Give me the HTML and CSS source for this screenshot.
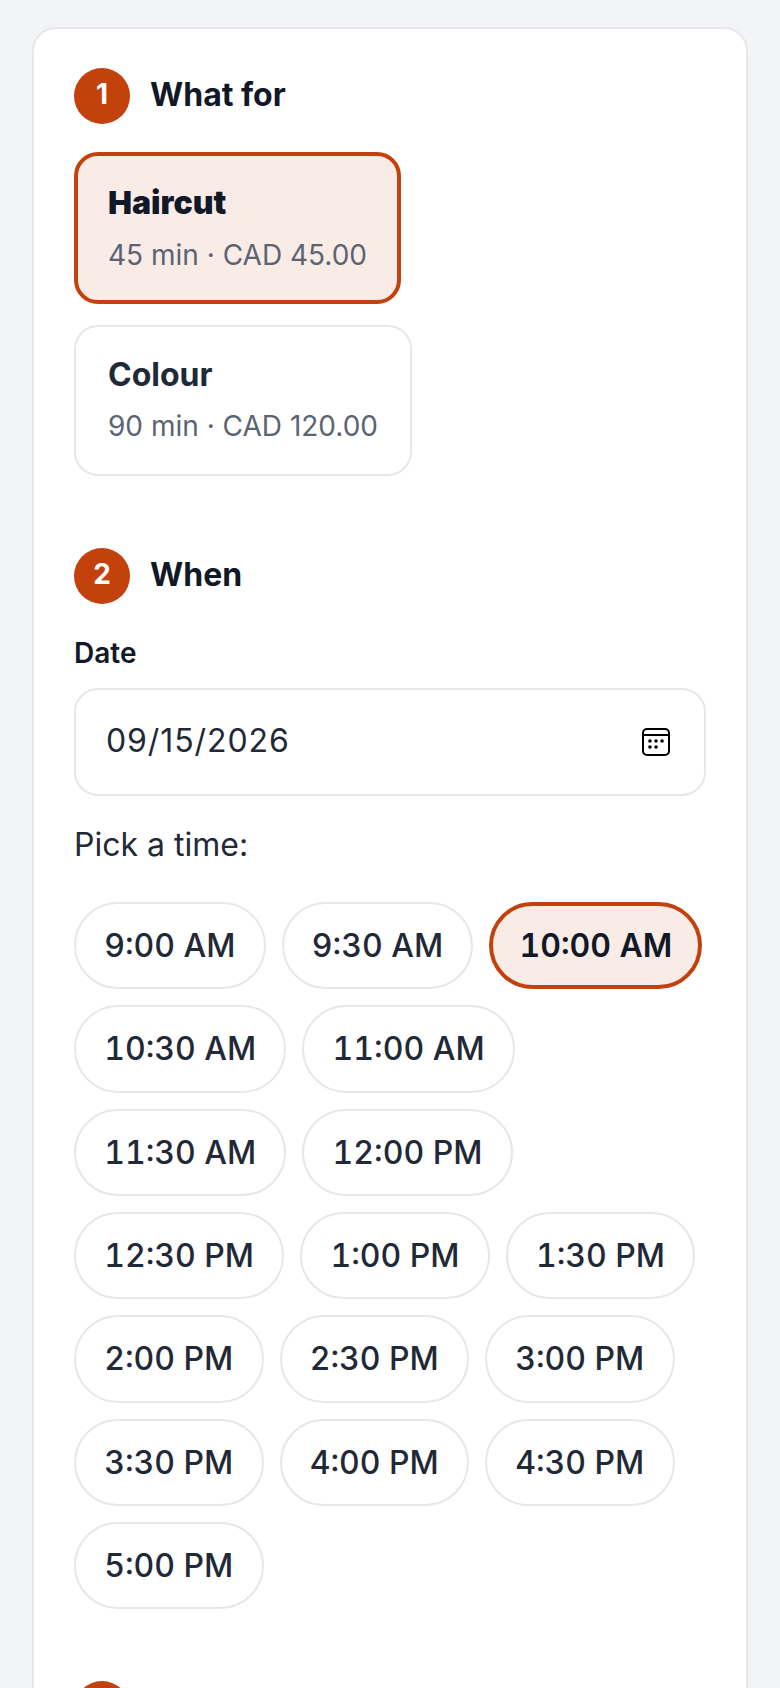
FILE: index.html
```html
<!DOCTYPE html>
<html lang="en">
<head>
  <meta charset="UTF-8">
  <title>Book an appointment</title>
  <link rel="stylesheet" href="styles.css">
</head>
<body>
  <main class="card">
    <section class="step">
      <h2 class="step-title"><span class="badge"><span class="badge-num">1</span></span><span class="title-text">What for</span></h2>
      <div class="services">
        <button class="service selected">
          <span class="service-name">Haircut</span>
          <span class="service-meta">45 min · CAD 45.00</span>
        </button>
        <button class="service">
          <span class="service-name">Colour</span>
          <span class="service-meta">90 min · CAD 120.00</span>
        </button>
      </div>
    </section>

    <section class="step">
      <h2 class="step-title when-title"><span class="badge"><span class="badge-num">2</span></span><span class="title-text">When</span></h2>
      <label class="field-label">Date</label>
      <div class="date-input">
        <span class="date-value">09/15/2026</span>
        <svg class="date-icon" viewBox="0 0 28 28" fill="none" stroke="#000" stroke-width="2">
          <rect x="1" y="1" width="26" height="26" rx="4"/>
          <path d="M1 7h26"/>
          <g fill="#000" stroke="none">
            <circle cx="8" cy="13" r="1.8"/>
            <circle cx="14" cy="13" r="1.8"/>
            <circle cx="20" cy="13" r="1.8"/>
            <circle cx="8" cy="19" r="1.8"/>
            <circle cx="14" cy="19" r="1.8"/>
          </g>
        </svg>
      </div>
      <p class="time-label">Pick a time:</p>
      <div class="times">
        <button class="time">9:00 AM</button>
        <button class="time">9:30 AM</button>
        <button class="time selected">10:00 AM</button>
        <button class="time">10:30 AM</button>
        <button class="time">11:00 AM</button>
        <button class="time">11:30 AM</button>
        <button class="time">12:00 PM</button>
        <button class="time">12:30 PM</button>
        <button class="time">1:00 PM</button>
        <button class="time">1:30 PM</button>
        <button class="time">2:00 PM</button>
        <button class="time">2:30 PM</button>
        <button class="time">3:00 PM</button>
        <button class="time">3:30 PM</button>
        <button class="time">4:00 PM</button>
        <button class="time">4:30 PM</button>
        <button class="time">5:00 PM</button>
      </div>
    </section>

    <section class="step">
      <div class="step-title"><span class="badge"></span></div>
    </section>
  </main>
</body>
</html>
```

FILE: styles.css
```css
html, body {
  height: 100%;
  overflow: hidden;
}
body {
  margin: 0;
  padding: 27px 32px 0;
  background-color: #f3f4f6;
  color: #111827;
  font-family: Inter, "Liberation Sans", sans-serif;
}
button {
  font-family: inherit;
  cursor: pointer;
}
.card {
  background-color: #fff;
  border: 2px solid #e5e7eb;
  border-radius: 24px;
  padding: 39px 40px;
}
.step {
  margin-bottom: 72px;
}
.step-title {
  display: flex;
  align-items: center;
  gap: 20px;
  margin: 0 0 28px;
  font-size: 32px;
  font-weight: 700;
  color: #111827;
}
.when-title {
  margin-bottom: 32px;
}
.title-text,
.badge-num {
  padding-bottom: 4px;
}
.badge {
  display: flex;
  align-items: center;
  justify-content: center;
  width: 56px;
  height: 56px;
  border-radius: 50%;
  background-color: #c2410c;
  color: #fff;
  font-size: 28px;
  font-weight: 700;
}
.services {
  display: flex;
  flex-direction: column;
  align-items: flex-start;
  gap: 21px;
}
.service {
  display: flex;
  flex-direction: column;
  gap: 15px;
  padding: 28px 32px 31px;
  background-color: #fff;
  border: 2px solid #e5e7eb;
  border-radius: 24px;
  text-align: left;
}
.service.selected {
  background-color: #f9ece7;
  border: 4px solid #c2410c;
  gap: 16px;
  padding: 27px 30px 28px;
}
.service-name {
  font-size: 32px;
  font-weight: 700;
  color: #1f2937;
}
.selected .service-name {
  font-weight: 900;
  color: #111827;
}
.service-meta {
  font-size: 28px;
  color: #5b6472;
}
.field-label {
  display: block;
  margin-bottom: 18px;
  font-size: 28px;
  font-weight: 600;
}
.date-input {
  display: flex;
  align-items: center;
  justify-content: space-between;
  height: 108px;
  box-sizing: border-box;
  padding: 0 34px 0 30px;
  border: 2px solid #e5e7eb;
  border-radius: 24px;
  font-size: 32px;
  letter-spacing: 0.9px;
  color: #1f2937;
}
.date-value {
  padding-bottom: 3px;
}
.date-icon {
  width: 28px;
  height: 28px;
}
.time-label {
  margin: 29px 0 38px;
  font-size: 32px;
  color: #1f2937;
}
.times {
  display: flex;
  flex-wrap: wrap;
  gap: 16px;
}
.time {
  padding: 0 28.2px;
  height: 87.33px;
  background-color: #fff;
  border: 2px solid #e5e7eb;
  border-radius: 44px;
  font-size: 32px;
  font-weight: 500;
  font-variant-numeric: tabular-nums;
  color: #1f2937;
}
.time.selected {
  background-color: #f9ece7;
  border: 4px solid #c2410c;
  padding: 0 26.2px;
  font-weight: 600;
  color: #111827;
}
```
